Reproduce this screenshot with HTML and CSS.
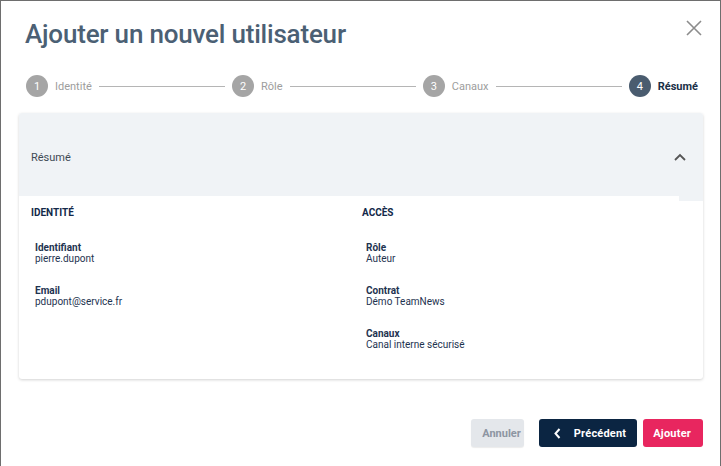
FILE: index.html
```html
<!DOCTYPE html>
<html lang="fr">
<head>
<meta charset="utf-8">
<title>Ajouter un nouvel utilisateur</title>
<link rel="stylesheet" href="styles.css">
</head>
<body>
<div class="modal">
  <div class="modal-head">
    <h1 class="title">Ajouter un nouvel utilisateur</h1>
    <button class="close" aria-label="Fermer">
      <svg width="16" height="16" viewBox="0 0 16 16"><path d="M1 1L15 15M15 1L1 15" stroke="#8c8c8c" stroke-width="1.6" fill="none"/></svg>
    </button>
  </div>
  <div class="stepper">
    <div class="step"><span class="dot">1</span><span class="label">Identité</span></div>
    <div class="line"></div>
    <div class="step"><span class="dot">2</span><span class="label">Rôle</span></div>
    <div class="line"></div>
    <div class="step"><span class="dot">3</span><span class="label">Canaux</span></div>
    <div class="line"></div>
    <div class="step active"><span class="dot">4</span><span class="label">Résumé</span></div>
  </div>
  <div class="card">
    <div class="card-head">
      <span>Résumé</span>
      <svg class="chev" width="12" height="8" viewBox="0 0 12 8"><path d="M1 7L6 2L11 7" stroke="#555" stroke-width="1.8" fill="none"/></svg>
    </div>
    <div class="grid">
      <div class="col">
        <div class="col-title">IDENTITÉ</div>
        <div class="item"><div class="k">Identifiant</div><div class="v">pierre.dupont</div></div>
        <div class="item"><div class="k">Email</div><div class="v">pdupont@service.fr</div></div>
      </div>
      <div class="col">
        <div class="col-title">ACCÈS</div>
        <div class="item"><div class="k">Rôle</div><div class="v">Auteur</div></div>
        <div class="item"><div class="k">Contrat</div><div class="v">Démo TeamNews</div></div>
        <div class="item"><div class="k">Canaux</div><div class="v">Canal interne sécurisé</div></div>
      </div>
    </div>
  </div>
  <div class="actions">
    <button class="btn cancel">Annuler</button>
    <button class="btn prev"><svg width="7" height="11" viewBox="0 0 7 11"><path d="M5.5 1L1.5 5.5L5.5 10" stroke="#fff" stroke-width="2" fill="none"/></svg>Précédent</button>
    <button class="btn add">Ajouter</button>
  </div>
</div>
</body>
</html>
```

FILE: styles.css
```css
html, body {
  margin: 0;
  padding: 0;
}
body {
  background: #6e6e6e;
  font-family: Roboto, "Noto Sans", sans-serif;
  width: 721px;
  height: 466px;
  overflow: hidden;
}
.modal {
  margin: 1px 1px 0 1px;
  height: 465px;
  background: #fff;
  padding: 0 17px 0 18px;
  box-sizing: border-box;
}
.modal-head {
  display: flex;
  justify-content: space-between;
  align-items: flex-start;
  padding: 17px 0 0 6px;
  height: 57px;
  box-sizing: border-box;
}
.title {
  margin: 0;
  font-family: Roboto, sans-serif;
  font-weight: 500;
  font-size: 26px;
  line-height: 32px;
  color: #4b6074;
  letter-spacing: -0.2px;
}
.close {
  border: 0;
  background: none;
  padding: 0;
  margin: 2px 1px 0 0;
  width: 16px;
  height: 16px;
  display: flex;
}
.stepper {
  display: flex;
  align-items: center;
  padding: 17px 5px 0 7px;
  height: 39px;
  box-sizing: border-box;
}
.step {
  display: flex;
  align-items: center;
  gap: 7px;
}
.dot {
  width: 22px;
  height: 22px;
  border-radius: 50%;
  background: #a5a5a5;
  color: #fff;
  font-size: 11px;
  display: flex;
  align-items: center;
  justify-content: center;
}
.label {
  font-size: 11px;
  color: #9d9d9d;
}
.step.active .dot {
  background: #4a5c6f;
}
.step.active .label {
  color: #1a2f47;
  font-weight: 700;
}
.line {
  flex: 1;
  height: 1px;
  background: #b5b5b5;
  margin: 0 7px;
}
.card {
  margin-top: 16px;
  height: 266px;
  background: #fff;
  border-radius: 3px;
  box-shadow: 0 1px 3px rgba(0, 0, 0, 0.18);
  overflow: hidden;
}
.card-head {
  height: 88px;
  background: #f0f3f6;
  display: flex;
  align-items: center;
  justify-content: space-between;
  padding: 0 17px 0 12px;
  font-size: 11px;
  color: #3f4a55;
}
.chev {
  display: block;
}
.grid {
  position: relative;
  margin-top: -5px;
  width: 660px;
  background: #fff;
  display: grid;
  grid-template-columns: 330px 330px;
}
.col {
  padding: 11px 12px 0 12px;
}
.col + .col {
  padding-left: 13px;
}
.col-title {
  font-size: 10px;
  font-weight: 700;
  color: #13294a;
  line-height: 12px;
  margin-bottom: 23px;
}
.item {
  padding-left: 4px;
  margin-bottom: 21px;
  font-size: 10px;
  line-height: 11px;
  color: #1e3350;
}
.item .k {
  font-weight: 700;
}
.actions {
  display: flex;
  justify-content: flex-end;
  margin-top: 40px;
  gap: 6px;
}
.btn {
  height: 28px;
  border: 0;
  border-radius: 3px;
  font-family: Roboto, sans-serif;
  font-size: 11px;
  font-weight: 700;
  letter-spacing: 0.2px;
  padding: 0 12px 0 10px;
  display: flex;
  align-items: center;
}
.cancel {
  background: #e4e7eb;
  color: #8d95a2;
  margin-right: 9px;
  letter-spacing: 0;
  padding: 0 3px 0 11px;
  box-shadow: 0 1px 1px rgba(0,0,0,0.08);
}
.prev {
  background: #0b2542;
  color: #fff;
  gap: 13px;
  padding: 0 11px 0 15px;
}
.add {
  background: #e8265f;
  color: #fff;
}
```
